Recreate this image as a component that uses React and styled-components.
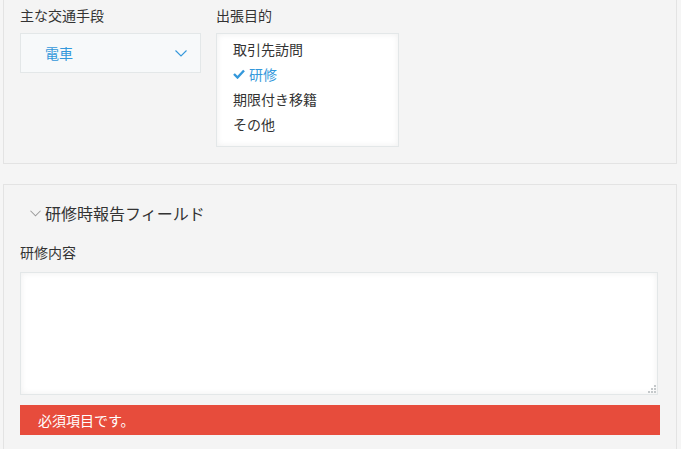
import React from "react";
import styled, { createGlobalStyle } from "styled-components";

const Global = createGlobalStyle`
  html, body { margin: 0; padding: 0; background: #f5f5f5; overflow: hidden; }
  body { font-family: "Noto Sans CJK JP", "Noto Sans", sans-serif; color: #333; }
  * { box-sizing: border-box; }
`;

const Page = styled.div`
  padding: 0 4px 0 3px;
  height: 449px;
  overflow: hidden;
`;

const Panel = styled.section`
  background: #f4f4f4;
  border: 1px solid #e3e3e3;
  padding: ${(p) => (p.$first ? "16px 16px 16px" : "15px 16px 40px")};
  margin-top: ${(p) => (p.$first ? "-12px" : "20px")};
`;

const Row = styled.div`
  display: flex;
  gap: 15px;
  align-items: flex-start;
`;

const Field = styled.div`
  display: flex;
  flex-direction: column;
`;

const Label = styled.div`
  font-size: 14px;
  line-height: 20px;
  color: #333;
  margin-bottom: ${(p) => p.$mb || 8}px;
`;

const Select = styled.div`
  width: 181px;
  height: 40px;
  background: #f7f9fa;
  border: 1px solid #e3e7e8;
  display: flex;
  align-items: center;
  justify-content: space-between;
  padding: 0 13px 0 24px;
  color: #3498db;
  font-size: 14px;
`;

const CheckGroup = styled.div`
  width: 183px;
  height: 114px;
  background: #fff;
  border: 1px solid #e3e7e8;
  box-shadow: inset 0 0 6px rgba(0, 0, 0, 0.07);
  padding: 2px 16px 10px;
  display: flex;
  flex-direction: column;
`;

const CheckItem = styled.div`
  height: 25px;
  display: flex;
  align-items: center;
  gap: 4px;
  font-size: 14px;
  color: ${(p) => (p.$checked ? "#3498db" : "#333")};
`;

const GroupHeader = styled.div`
  display: flex;
  align-items: center;
  gap: 4px;
  height: 26px;
  padding-left: 10px;
  font-size: 16px;
  color: #333;
  margin-bottom: 16px;
`;

const TextAreaWrap = styled.div`
  position: relative;
  width: 638px;
  height: 123px;
`;

const TextArea = styled.textarea`
  display: block;
  width: 100%;
  height: 100%;
  border: 1px solid #e3e7e8;
  background: #fff;
  box-shadow: inset 0 0 6px rgba(0, 0, 0, 0.07);
  resize: none;
  outline: none;
  font-family: inherit;
  font-size: 14px;
`;

const Grip = styled.svg`
  position: absolute;
  right: 1px;
  bottom: 1px;
`;

const ErrorBar = styled.div`
  margin-top: 10px;
  height: 30px;
  background: #e74c3c;
  color: #fff;
  font-size: 14px;
  display: flex;
  align-items: center;
  padding-left: 18px;
`;

const Chevron = ({ color, w = 12, h = 7 }) => (
  <svg width={w} height={h} viewBox="0 0 12 7" fill="none">
    <path d="M0.5 0.5 L6 6 L11.5 0.5" stroke={color} strokeWidth="1.1" />
  </svg>
);

const Check = () => (
  <svg width="12" height="10" viewBox="0 0 12 10">
    <path d="M1 5 L4.5 8.5 L11 1.5" stroke="#3498db" strokeWidth="2.4" fill="none" />
  </svg>
);

const options = [
  { label: "取引先訪問" },
  { label: "研修", checked: true },
  { label: "期限付き移籍" },
  { label: "その他" },
];

export default function App() {
  return (
    <>
      <Global />
      <Page>
        <Panel $first>
          <Row>
            <Field>
              <Label>主な交通手段</Label>
              <Select>
                <span>電車</span>
                <Chevron color="#3498db" />
              </Select>
            </Field>
            <Field>
              <Label>出張目的</Label>
              <CheckGroup>
                {options.map((o) => (
                  <CheckItem key={o.label} $checked={o.checked}>
                    {o.checked && <Check />}
                    <span>{o.label}</span>
                  </CheckItem>
                ))}
              </CheckGroup>
            </Field>
          </Row>
        </Panel>
        <Panel>
          <GroupHeader>
            <Chevron color="#999" w={11} h={7} />
            <span>研修時報告フィールド</span>
          </GroupHeader>
          <Label $mb={10}>研修内容</Label>
          <TextAreaWrap>
            <TextArea />
            <Grip width="10" height="10" viewBox="0 0 10 10">
              <rect x="7" y="1" width="2" height="2" fill="#c4c8ca" />
              <rect x="4" y="4" width="2" height="2" fill="#c4c8ca" />
              <rect x="7" y="4" width="2" height="2" fill="#c4c8ca" />
              <rect x="1" y="7" width="2" height="2" fill="#c4c8ca" />
              <rect x="4" y="7" width="2" height="2" fill="#c4c8ca" />
              <rect x="7" y="7" width="2" height="2" fill="#c4c8ca" />
            </Grip>
          </TextAreaWrap>
          <ErrorBar>必須項目です。</ErrorBar>
        </Panel>
      </Page>
    </>
  );
}
